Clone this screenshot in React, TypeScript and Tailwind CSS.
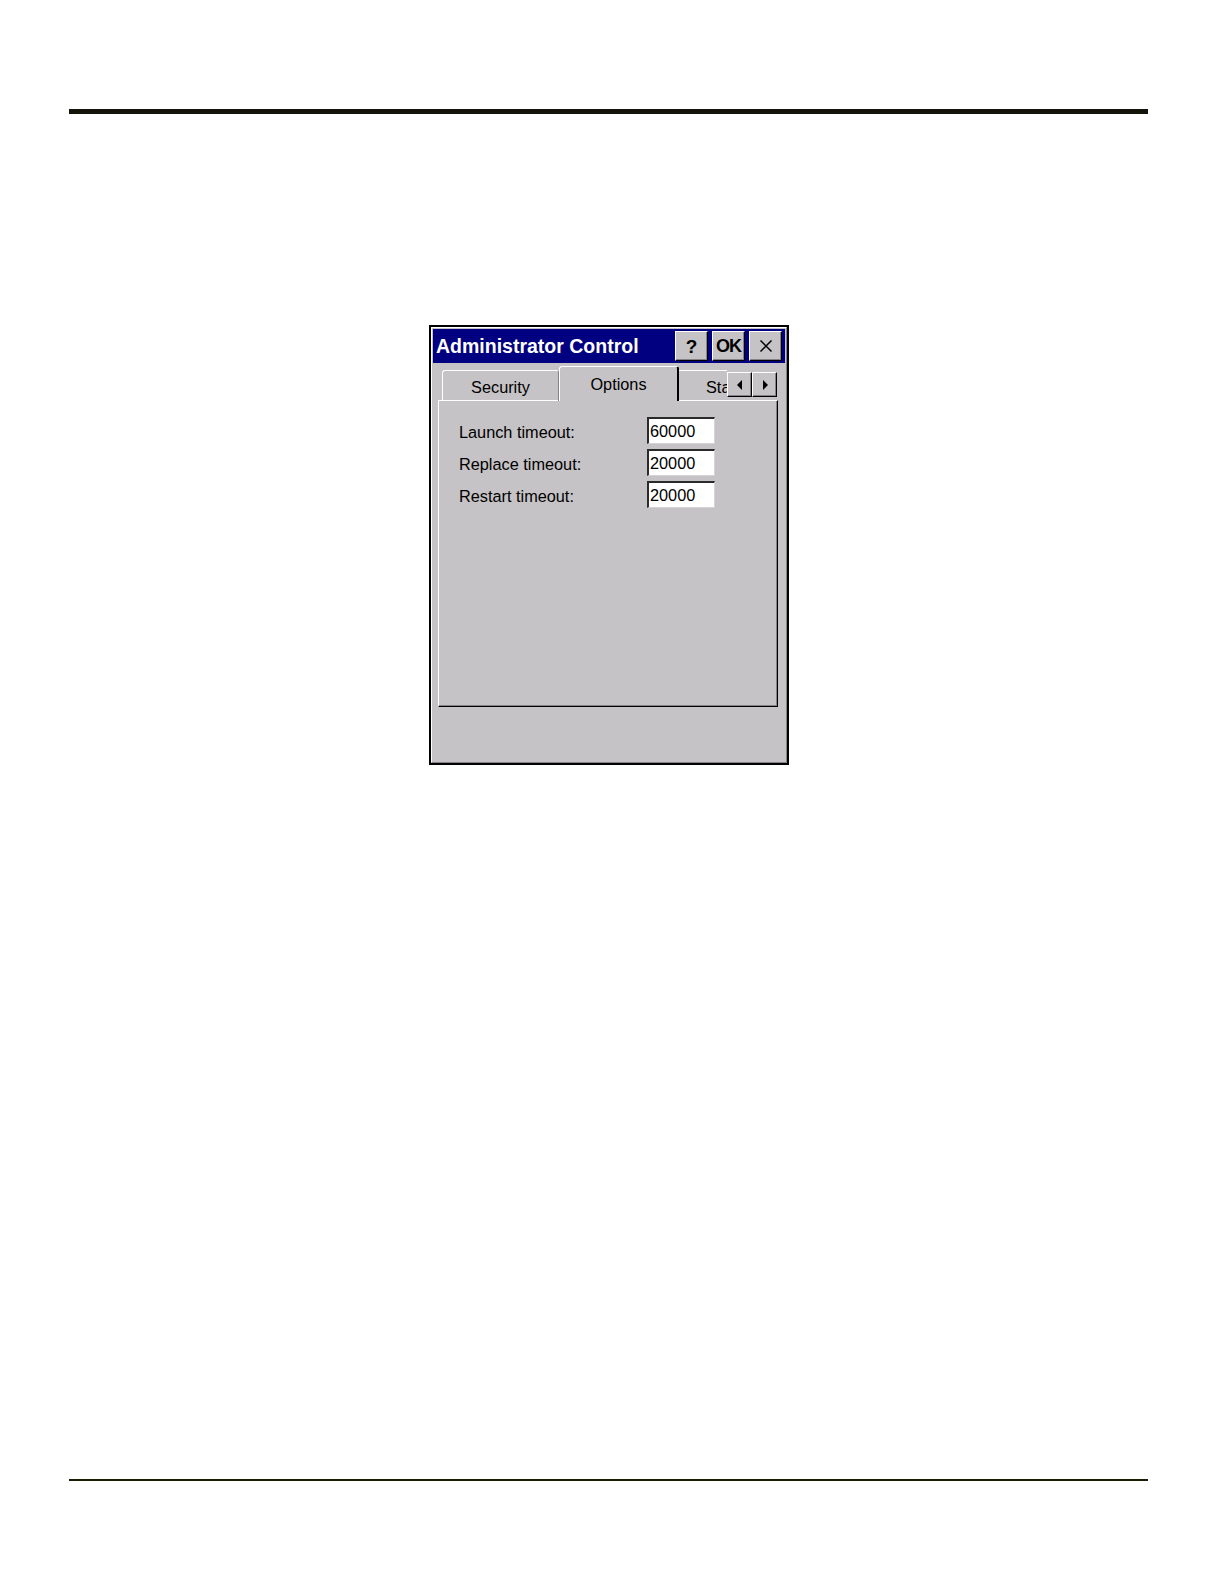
import React from "react";

const FONT = { fontFamily: '"Liberation Sans", Arial, sans-serif' };

const CaptionButton = ({ children }: { children: React.ReactNode }) => (
  <div className="w-[33px] h-[30px] bg-[#c6c3c6] border-t border-l border-white border-r border-b border-r-black border-b-black flex items-center justify-center shadow-[inset_-1px_-1px_0_#848284]">
    {children}
  </div>
);

const ArrowButton = ({ dir }: { dir: "left" | "right" }) => (
  <div className="w-[25px] h-[25px] bg-[#c6c3c6] border-t border-l border-white border-r border-b border-r-black border-b-black flex items-center justify-center shadow-[inset_-1px_-1px_0_#848284]">
    <svg width="6" height="10" viewBox="0 0 6 10">
      {dir === "left" ? (
        <polygon points="5,0 5,10 0,5" fill="#000" />
      ) : (
        <polygon points="1,0 1,10 6,5" fill="#000" />
      )}
    </svg>
  </div>
);

const Field = ({ label, value }: { label: string; value: string }) => (
  <div className="flex items-center h-[27px]">
    <span className="w-[188px] text-[16.3px] text-black leading-none pt-[4px]">{label}</span>
    <div className="w-[68px] h-[27px] bg-white border-t-2 border-l-2 border-t-[#2a2a2a] border-l-[#2a2a2a] border-r border-b border-r-[#d6d3d6] border-b-[#d6d3d6] flex items-center pl-[1px]">
      <span className="text-[16.3px] text-black leading-none">{value}</span>
    </div>
  </div>
);

export default function App() {
  return (
    <div className="w-[1224px] h-[1584px] bg-white flex flex-col" style={FONT}>
      <div className="mt-[109px] ml-[69px] w-[1079px] h-[5px] bg-[#14140a]" />

      <div className="mt-[211px] ml-[429px] w-[360px] h-[440px] border-2 border-black bg-[#c6c3c6]">
        <div className="h-full border-t border-l border-white border-r border-b border-r-[#848284] border-b-[#848284] flex flex-col px-[1px] pt-[1px]">
          {/* Title bar */}
          <div className="h-[34px] bg-[#000080] flex items-center pl-[3px] pr-[3px]">
            <span className="text-white font-bold text-[19.5px] leading-none pt-[1px]">
              Administrator Control
            </span>
            <div className="ml-auto flex gap-[4px]">
              <CaptionButton>
                <span className="font-bold text-[19px] leading-none text-black">?</span>
              </CaptionButton>
              <CaptionButton>
                <span className="font-bold text-[18px] leading-none text-black tracking-[-1px]">OK</span>
              </CaptionButton>
              <CaptionButton>
                <svg width="14" height="14" viewBox="0 0 14 14">
                  <path d="M1.5 1.5 L12.5 12.5 M12.5 1.5 L1.5 12.5" stroke="#000" strokeWidth="1.5" />
                </svg>
              </CaptionButton>
            </div>
          </div>

          {/* Tabs row */}
          <div className="h-[37px] flex items-end pl-[9px] relative z-10">
            <div className="w-[117px] h-[31px] mb-[-1px] border-t border-l border-white border-r border-r-[#848284] rounded-t-[3px] flex items-center justify-center">
              <span className="text-[16.3px] text-black leading-none mt-[2px]">Security</span>
            </div>
            <div className="w-[120px] h-[35px] mb-[-1px] bg-[#c6c3c6] border-t border-l border-white border-r-2 border-r-black rounded-t-[3px] flex items-start justify-center pt-[9px]">
              <span className="text-[16.3px] text-black leading-none">Options</span>
            </div>
            <div className="w-[48px] h-[31px] mb-[-1px] border-t border-white overflow-hidden flex items-center pl-[27px]">
              <span className="text-[16.3px] text-black leading-none mt-[2px] whitespace-nowrap">Sta</span>
            </div>
            <div className="flex self-start mt-[9px]">
              <ArrowButton dir="left" />
              <ArrowButton dir="right" />
            </div>
          </div>

          {/* Tab panel */}
          <div className="ml-[5px] mr-[7px] h-[307px] border-t border-l border-white border-r border-b border-r-black border-b-black shadow-[inset_-1px_-1px_0_#848284] flex flex-col pt-[16px] pl-[20px] gap-[5px]">
            <Field label="Launch timeout:" value="60000" />
            <Field label="Replace timeout:" value="20000" />
            <Field label="Restart timeout:" value="20000" />
          </div>
        </div>
      </div>

      <div className="mt-[714px] ml-[69px] w-[1079px] h-[2px] bg-[#1a1a05]" />
    </div>
  );
}
